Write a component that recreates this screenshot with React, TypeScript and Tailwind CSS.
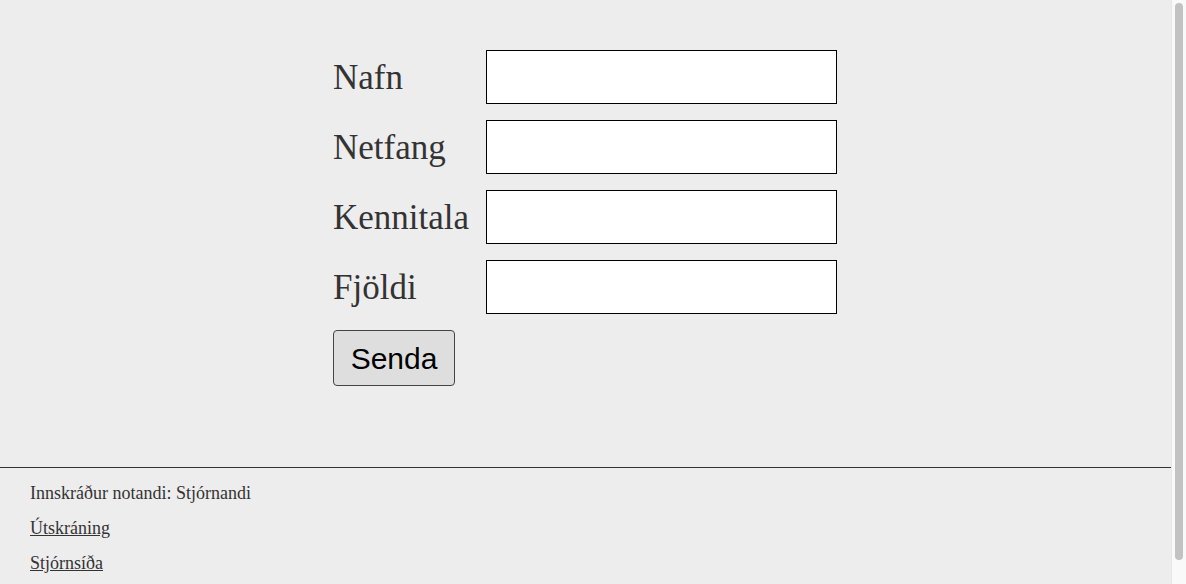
import React from "react";

const fields = ["Nafn", "Netfang", "Kennitala", "Fjöldi"];

export default function App() {
  return (
    <div className="flex min-h-screen bg-[#ededed] text-[#333] font-['Liberation_Serif',serif]">
      <div className="flex-1">
        <main className="flex justify-center pt-[50px] pb-[81px] pr-px">
          <form
            className="grid grid-cols-[153px_351px] gap-y-4 items-center"
            onSubmit={(e) => e.preventDefault()}
          >
            {fields.map((f) => (
              <React.Fragment key={f}>
                <label className="text-[35px] leading-none">{f}</label>
                <input
                  type="text"
                  className="h-[54px] w-[351px] border border-black bg-white px-2 text-lg outline-none"
                />
              </React.Fragment>
            ))}
            <div className="col-span-2">
              <button
                type="submit"
                className="h-[56px] w-[122px] rounded-[4px] border border-[#444] bg-[#dedede] font-['Liberation_Sans',sans-serif] text-[30px] text-black"
              >
                Senda
              </button>
            </div>
          </form>
        </main>
        <footer className="border-t border-[#333] px-[30px] pb-4 text-[18px] leading-[19px]">
          <p className="pt-4">Innskráður notandi: Stjórnandi</p>
          <p className="pt-4">
            <a href="#" className="underline">Útskráning</a>
          </p>
          <p className="pt-4">
            <a href="#" className="underline">Stjórnsíða</a>
          </p>
        </footer>
      </div>
      {/* page scrollbar */}
      <div className="w-[15px] shrink-0 border-l border-[#e6e6e6] bg-[#f9f9f9] pt-[3px] pl-[3px]">
        <div className="h-[557px] w-[8px] rounded-full bg-[#c2c2c2]" />
      </div>
    </div>
  );
}
